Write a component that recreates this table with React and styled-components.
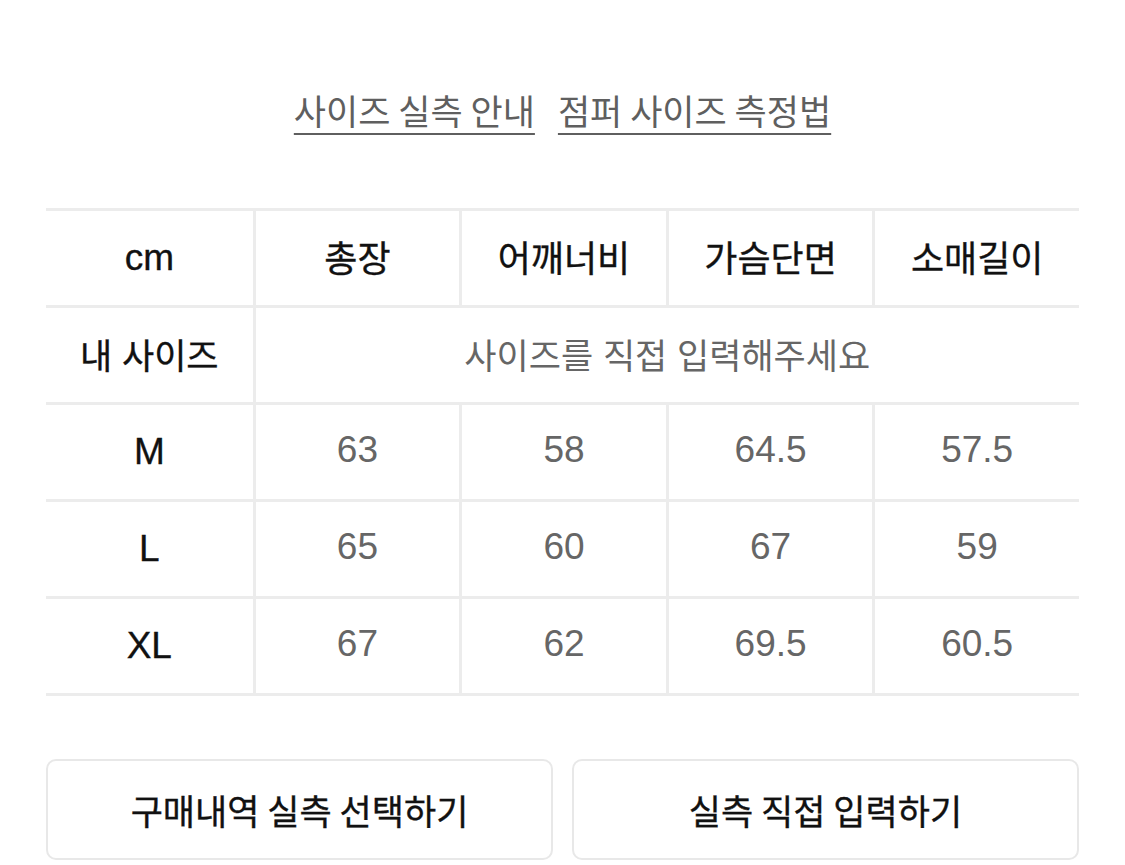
import styled, { createGlobalStyle } from 'styled-components'

const GlobalStyle = createGlobalStyle`
  body {
    margin: 0;
    background: #fff;
    font-family: "Liberation Sans", "Noto Sans CJK KR", sans-serif;
  }
`

const Page = styled.div`
  width: 1125px;
  padding: 0 46px;
  box-sizing: border-box;
`

const Links = styled.div`
  display: flex;
  justify-content: center;
  gap: 23px;
  padding-top: 88px;
  height: 120px;
  box-sizing: border-box;
`

const GuideLink = styled.a`
  font-family: "Noto Sans CJK KR", sans-serif;
  font-size: 35px;
  line-height: 44px;
  color: #5f5f5f;
  text-decoration: underline;
  text-decoration-thickness: 2px;
  text-underline-offset: 8px;
  cursor: pointer;
`

const Table = styled.div`
  margin-top: 88px;
  display: grid;
  grid-template-columns: repeat(5, 1fr);
  grid-auto-rows: 97px;
  border-bottom: 3px solid #ececec;
`

const Cell = styled.div`
  display: flex;
  align-items: center;
  justify-content: center;
  border-top: 3px solid #ececec;
  border-left: ${p => (p.$first ? 'none' : '3px solid #ececec')};
  grid-column: ${p => p.$span || 'auto'};
  font-size: ${p => (p.$latin ? '37px' : p.$col ? '36px' : '35px')};
  font-weight: 400;
  -webkit-text-stroke: ${p => (p.$head ? '0.35px #111' : '0')};
  color: ${p => (p.$head ? '#111' : '#666')};
  padding-bottom: ${p => (p.$latin && p.$head ? '0' : '4px')};
`

const Buttons = styled.div`
  display: grid;
  grid-template-columns: 1fr 1fr;
  gap: 19px;
  margin-top: 63px;
`

const Button = styled.button`
  height: 101px;
  border: 2px solid #e8e8e8;
  border-radius: 10px;
  background: #fff;
  font-family: "Noto Sans CJK KR", sans-serif;
  font-size: 35px;
  font-weight: 400;
  -webkit-text-stroke: 0.35px #111;
  color: #111;
  padding: 0;
`

const columns = ['총장', '어깨너비', '가슴단면', '소매길이']
const rows = [
  ['M', '63', '58', '64.5', '57.5'],
  ['L', '65', '60', '67', '59'],
  ['XL', '67', '62', '69.5', '60.5'],
]

export default function App() {
  return (
    <Page>
      <GlobalStyle />
      <Links>
        <GuideLink>사이즈 실측 안내</GuideLink>
        <GuideLink>점퍼 사이즈 측정법</GuideLink>
      </Links>
      <Table>
        <Cell $first $head $latin>cm</Cell>
        {columns.map(c => (
          <Cell key={c} $head $col>{c}</Cell>
        ))}
        <Cell $first $head>내 사이즈</Cell>
        <Cell $span="span 4">사이즈를 직접 입력해주세요</Cell>
        {rows.map(r =>
          r.map((v, i) => (
            <Cell key={r[0] + i} $first={i === 0} $head={i === 0} $latin>{v}</Cell>
          ))
        )}
      </Table>
      <Buttons>
        <Button>구매내역 실측 선택하기</Button>
        <Button>실측 직접 입력하기</Button>
      </Buttons>
    </Page>
  )
}
